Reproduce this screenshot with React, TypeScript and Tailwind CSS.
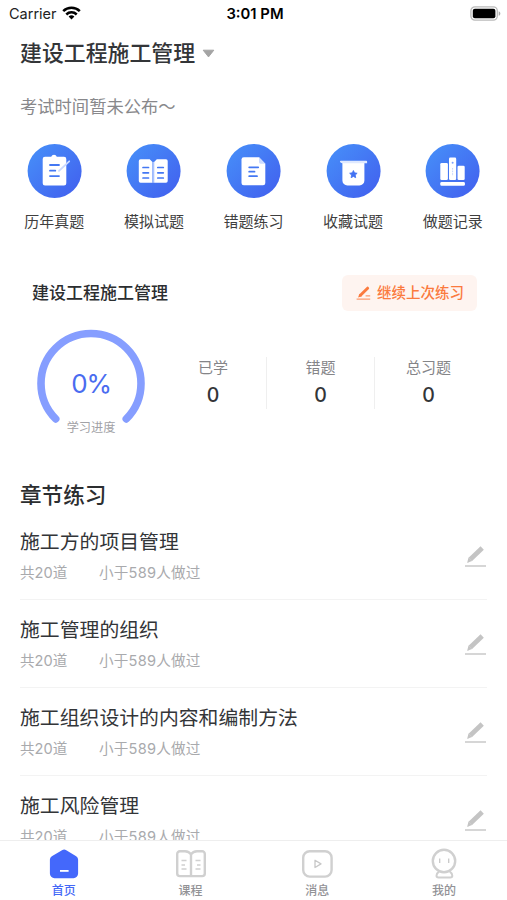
import type { ReactNode } from 'react';

interface Shortcut {
  label: string;
  icon: ReactNode;
}

interface Chapter {
  title: string;
  total: number;
  done: number;
}

const chapters: Chapter[] = [
  { title: '施工方的项目管理', total: 20, done: 589 },
  { title: '施工管理的组织', total: 20, done: 589 },
  { title: '施工组织设计的内容和编制方法', total: 20, done: 589 },
  { title: '施工风险管理', total: 20, done: 589 },
];

const stats = [
  { label: '已学', value: 0 },
  { label: '错题', value: 0 },
  { label: '总习题', value: 0 },
];

// Shortcut glyphs, all drawn on the 54px disc
const shortcuts: Shortcut[] = [
  {
    label: '历年真题',
    icon: (
      <>
        <path
          d="M18 12.7h6.2a3 3 0 0 1 5.6 0H37a2.3 2.3 0 0 1 2.3 2.3v24.3a2.3 2.3 0 0 1-2.3 2.3H18a2.3 2.3 0 0 1-2.3-2.3V15a2.3 2.3 0 0 1 2.3-2.3Z"
          fill="#fff"
        />
        <path d="M23 21h9M23 26.7h5.3M23 32.1h9" stroke="#4478f3" strokeWidth="1.8" strokeLinecap="round" />
        <path d="M32 26.9 42.2 17.3" stroke="#c9d9ff" strokeWidth="1.8" strokeLinecap="round" />
      </>
    ),
  },
  {
    label: '模拟试题',
    icon: (
      <>
        <path d="M14.5 15.3h9.2l2.7 2.6v20.9H14.5a1.7 1.7 0 0 1-1.7-1.7V17a1.7 1.7 0 0 1 1.7-1.7Z" fill="#fff" />
        <path d="M40 15.3h-9.2l-2.7 2.6v20.9H40a1.7 1.7 0 0 0 1.7-1.7V17a1.7 1.7 0 0 0-1.7-1.7Z" fill="#fff" />
        <path d="M26.4 17.9h1.7v20.9h-1.7Z" fill="#a9c3ff" />
        <path
          d="M17 23.5h5.5M17 28.8h5.5M17 34h5.5M31.8 23.5h5.5M31.8 28.8h5.5M31.8 34h5.5"
          stroke="#4478f3"
          strokeWidth="1.7"
          strokeLinecap="round"
        />
      </>
    ),
  },
  {
    label: '错题练习',
    icon: (
      <>
        <path
          d="M17.8 13.2H33l6.3 6.5V39a2.3 2.3 0 0 1-2.3 2.3H17.8a2.3 2.3 0 0 1-2.3-2.3V15.5a2.3 2.3 0 0 1 2.3-2.3Z"
          fill="#fff"
        />
        <path d="M33 13.2V18a1.7 1.7 0 0 0 1.7 1.7h4.6Z" fill="#cbdbff" />
        <path d="M23.2 23.3h9M23.2 27.7h5.3M23.2 32.2h7.8" stroke="#4478f3" strokeWidth="1.8" strokeLinecap="round" />
      </>
    ),
  },
  {
    label: '收藏试题',
    icon: (
      <>
        <path d="M16.4 17h22v19.4a5 5 0 0 1-5 5h-12a5 5 0 0 1-5-5Z" fill="#fff" />
        <path d="M13.9 17.6a.8.8 0 0 1 .8-.8h25.6a.8.8 0 0 1 .8.8v1.6H16.4a2.5 2.5 0 0 1-2.5-1.6Z" fill="#dfe9ff" />
        <path
          d="m27.4 26.5 1.15 2.35 2.6.4-1.9 1.85.45 2.6-2.3-1.25-2.3 1.25.45-2.6-1.9-1.85 2.6-.4Z"
          fill="#4272f3"
          stroke="#4272f3"
          strokeWidth=".8"
          strokeLinejoin="round"
        />
      </>
    ),
  },
  {
    label: '做题记录',
    icon: (
      <>
        <rect x="15.3" y="19" width="7.6" height="17" rx="1.3" fill="#fff" />
        <rect x="24" y="13.6" width="7.2" height="22.4" rx="1.3" fill="#fff" />
        <rect x="32.5" y="21.8" width="7.2" height="14.2" rx="1.3" fill="#fff" />
        <rect x="15.3" y="38" width="24.6" height="3.8" rx="1.3" fill="#fff" />
        <circle cx="27.6" cy="18.8" r="1" fill="#7ea3fa" />
        <path d="M27.6 24v8" stroke="#c3d4fd" strokeDasharray="1.6 1" />
      </>
    ),
  },
];

function StatusBar() {
  return (
    <div className="grid h-7 grid-cols-3 items-center pl-[9px] pr-[6px] text-[14.5px] text-[#222]">
      <div className="flex items-center gap-[5px]">
        <span>Carrier</span>
        <svg className="-mt-[2px]" width="19" height="14" viewBox="0 0 19 14" fill="none" stroke="#000" strokeWidth="2.5">
          <path d="M1.2 5.2a11.8 11.8 0 0 1 16.6 0" />
          <path d="M4.3 8.5a7.4 7.4 0 0 1 10.4 0" />
          <path d="m9.5 13.6-2.9-3a4.1 4.1 0 0 1 5.8 0Z" fill="#000" stroke="none" />
        </svg>
      </div>
      <span className="text-center text-[14.8px] font-semibold text-black">3:01 PM</span>
      <svg className="-mt-[2px] justify-self-end" width="31" height="15" viewBox="0 0 31 15">
        <rect x=".9" y=".9" width="26.4" height="13.2" rx="4" fill="#fff" stroke="#bababa" strokeWidth="1.3" />
        <rect x="2.8" y="2.8" width="22.6" height="9.4" rx="2" fill="#000" />
        <path d="M28.7 5.2c2.2 1 2.2 3.6 0 4.6Z" fill="#aaa" />
      </svg>
    </div>
  );
}

function ShortcutItem({ label, icon }: Shortcut) {
  return (
    <div className="flex flex-col items-center">
      <svg width="55" height="55" viewBox="0 0 55 55" fill="none">
        <circle cx="27.6" cy="27" r="27" fill="url(#disc)" />
        {icon}
      </svg>
      <span className="mt-[12px] text-[15px] leading-[22px] text-[#3f3f3f]">{label}</span>
    </div>
  );
}

function ProgressGauge() {
  return (
    <div className="relative h-[110px] w-[108px]">
      <svg width="108" height="108" viewBox="0 0 108 108" fill="none">
        <path d="M18.7 89.9a50 50 0 1 1 70.6 0" stroke="#869eff" strokeWidth="7.6" strokeLinecap="round" />
      </svg>
      <span className="absolute inset-x-0 top-[39px] text-center text-[26px] leading-[32px] tracking-[-1.2px] text-[#4a6cf0]">
        0%
      </span>
      <span className="absolute inset-x-0 top-[89px] text-center text-[12.2px] leading-[20px] text-[#a2a2a6]">
        学习进度
      </span>
    </div>
  );
}

function ChapterRow({ title, total, done }: Chapter) {
  return (
    <li className="flex h-[88px] items-start justify-between border-b border-[#f3f3f3]">
      <div className="pt-[15px]">
        <h3 className="text-[19.85px] leading-[30px] text-[#333538]">{title}</h3>
        <p className="mt-[5px] flex text-[14.6px] leading-[22px] text-[#a9aaad]">
          <span className="w-[79px]">共{total}道</span>
          <span className="tracking-[0.2px]">小于{done}人做过</span>
        </p>
      </div>
      <svg className="mt-[33px]" width="23" height="24" viewBox="0 0 23 24" fill="none">
        <path d="M18.2 3.1 6.2 14.4" stroke="#c4c4c4" strokeWidth="4.8" />
        <path d="m4.5 12.6 3.4 3.5-4.8 1.8Z" fill="#c4c4c4" />
        <path d="M1 21h21" stroke="#d2d2d2" strokeWidth="1.8" />
      </svg>
    </li>
  );
}

function TabItem({ label, active, children }: { label: string; active?: boolean; children: ReactNode }) {
  return (
    <div className="flex flex-col items-center pl-[1px] pt-[7px]">
      <svg width="32" height="32" viewBox="0 0 32 32" fill="none">
        {children}
      </svg>
      <span
        className={`mt-[1px] text-[12px] font-medium leading-[20px] ${active ? 'text-[#4468f7]' : 'text-[#929296]'}`}
      >
        {label}
      </span>
    </div>
  );
}

export default function App() {
  return (
    <div className="flex h-[900px] w-[507px] flex-col overflow-hidden bg-white font-['Inter','Noto_Sans_CJK_SC',sans-serif]">
      <svg className="absolute size-0" aria-hidden="true">
        <linearGradient id="disc" x1="0" y1="0" x2="1" y2="1">
          <stop offset=".1" stopColor="#468cf8" />
          <stop offset=".9" stopColor="#4263ef" />
        </linearGradient>
      </svg>

      <StatusBar />

      <main className="min-h-0 flex-1 overflow-hidden">
        <header className="px-5">
          <div className="flex h-[50px] items-center gap-[7px]">
            <h1 className="text-[21.9px] font-medium leading-[32px] text-[#333538]">建设工程施工管理</h1>
            <svg width="13" height="9" viewBox="0 0 13 9">
              <path d="M1.2 1.2h10.6L6.5 7.9Z" fill="#a4a4a4" stroke="#a4a4a4" strokeLinejoin="round" />
            </svg>
          </div>
          <p className="mt-[17px] text-[17.3px] leading-[24px] text-[#88888b]">考试时间暂未公布～</p>
        </header>

        <section className="mt-[25px] grid grid-cols-5 px-[4.5px]">
          {shortcuts.map((item) => (
            <ShortcutItem key={item.label} {...item} />
          ))}
        </section>

        <section className="mt-[42px] h-[190px] pl-8 pr-[30px]">
          <div className="flex h-[36px] items-center justify-between">
            <h2 className="pt-[1px] text-[17px] font-medium text-[#2c2e30]">建设工程施工管理</h2>
            <button className="flex h-[36px] w-[135px] items-center gap-[6px] rounded-[6px] bg-[#fef4f0] pl-[14px] text-[14.5px] font-medium text-[#fb7a3e]">
              <svg width="15" height="15" viewBox="0 0 15 15" fill="none">
                <path d="M11.6 2.2 4.7 9" stroke="#fb7a3e" strokeWidth="3" strokeLinecap="round" />
                <path d="m3.4 7.7 2.5 2.6-3.8 1.2Z" fill="#fb7a3e" />
                <path d="M.6 13.2h13.6M9.6 9.9h4.6" stroke="#fb9b70" strokeWidth="1.3" />
              </svg>
              继续上次练习
            </button>
          </div>
          <div className="mt-[18px] flex pl-[5px]">
            <ProgressGauge />
            <div className="ml-[15px] mt-[28px] grid h-[52px] grid-cols-[107px_108px_107px] divide-x divide-[#efefef]">
              {stats.map((stat) => (
                <div key={stat.label} className="flex flex-col items-center">
                  <span className="mt-[1px] text-[15px] leading-[20px] text-[#858588]">{stat.label}</span>
                  <span className="mt-[4px] text-[19.5px] font-medium leading-[26px] text-[#333538]">{stat.value}</span>
                </div>
              ))}
            </div>
          </div>
        </section>

        <section className="px-5">
          <h2 className="mt-[14px] text-[21.6px] font-medium leading-[32px] text-[#2c2e30]">章节练习</h2>
          <ul className="mt-[1px]">
            {chapters.map((chapter) => (
              <ChapterRow key={chapter.title} {...chapter} />
            ))}
          </ul>
        </section>
      </main>

      <nav className="grid h-[60px] shrink-0 grid-cols-4 border-t border-[#eee] bg-white">
        <TabItem label="首页" active>
          <path
            d="M14 2.2a4 4 0 0 1 4.3 0l9.9 6a4 4 0 0 1 1.9 3.4v14a4.6 4.6 0 0 1-4.6 4.6h-19a4.6 4.6 0 0 1-4.6-4.6v-14a4 4 0 0 1 1.9-3.4Z"
            fill="#4468fb"
          />
          <path d="M12 22.9h8.6" stroke="#fff" strokeWidth="1.8" />
        </TabItem>
        <TabItem label="课程">
          <path
            d="M16 6.5C14.5 4 12.5 3.3 10 3.3H4.8a2.6 2.6 0 0 0-2.6 2.6v19.6a2.6 2.6 0 0 0 2.6 2.6h22.4a2.6 2.6 0 0 0 2.6-2.6V5.9a2.6 2.6 0 0 0-2.6-2.6H22c-2.5 0-4.5.7-6 3.2Zm0 0v21.6"
            stroke="#d0d0d0"
            strokeWidth="2.4"
            strokeLinejoin="round"
          />
          <path d="M6.5 12.5h5M6.5 17h3.5M6.5 21h5M20.5 12.5h5M22 17h3.5M20.5 21h5" stroke="#d0d0d0" strokeWidth="1.4" />
        </TabItem>
        <TabItem label="消息">
          <rect x="2.2" y="3.2" width="28.4" height="25.4" rx="6.5" stroke="#d0d0d0" strokeWidth="2.4" />
          <path d="M14 12.3v7.2l6-3.6Z" stroke="#c8c8c8" strokeWidth="1.3" strokeLinejoin="round" />
        </TabItem>
        <TabItem label="我的">
          <circle cx="16" cy="13" r="11.2" stroke="#d0d0d0" strokeWidth="2.4" />
          <path
            d="M11 23.7c-1.5 1-2.5 2.5-2.5 4 0 1 .8 1.7 2 1.7h11.8c1.2 0 2-.7 2-1.7 0-1.5-1-3-2.5-4"
            stroke="#d0d0d0"
            strokeWidth="2"
          />
          <path d="M11.7 10.5V15M20.7 10.5V15" stroke="#c8c8c8" strokeWidth="1.3" />
        </TabItem>
      </nav>
    </div>
  );
}
